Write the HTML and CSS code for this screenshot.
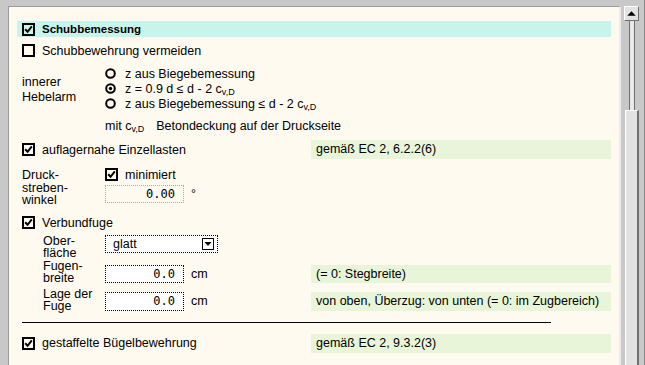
FILE: index.html
```html
<!DOCTYPE html>
<html lang="de">
<head>
    <meta charset="UTF-8">
    <title>Schubbemessung</title>
    <link rel="stylesheet" href="styles.css">
</head>
<body>
<div class="frame">
    <div class="panel">
        <div class="head">
            <svg class="cb" viewBox="0 0 13 13"><rect x="1" y="1" width="11" height="11"/><path d="M3.2 6.2 L5.6 8.8 L9.8 3.4"/></svg>
            <span>Schubbemessung</span>
        </div>
        <div class="line">
            <svg class="cb" viewBox="0 0 13 13"><rect x="1" y="1" width="11" height="11"/></svg>
            <span>Schubbewehrung vermeiden</span>
        </div>

        <div class="grid hebel">
            <div class="lbl">innerer<br>Hebelarm</div>
            <div class="opts">
                <div class="opt"><svg class="rb" viewBox="0 0 11 11"><circle cx="5.5" cy="5.5" r="4.3"/></svg><span>z aus Biegebemessung</span></div>
                <div class="opt"><svg class="rb" viewBox="0 0 11 11"><circle cx="5.5" cy="5.5" r="4.3"/><circle class="dot" cx="5.5" cy="5.5" r="1.7"/></svg><span>z = 0.9 d ≤ d - 2 c<sub>v,D</sub></span></div>
                <div class="opt"><svg class="rb" viewBox="0 0 11 11"><circle cx="5.5" cy="5.5" r="4.3"/></svg><span>z aus Biegebemessung ≤ d - 2 c<sub>v,D</sub></span></div>
            </div>
        </div>
        <div class="mit"><span class="sym">mit c<sub>v,D</sub></span>Betondeckung auf der Druckseite</div>

        <div class="grid row auflager">
            <div class="span2">
                <svg class="cb" viewBox="0 0 13 13"><rect x="1" y="1" width="11" height="11"/><path d="M3.2 6.2 L5.6 8.8 L9.8 3.4"/></svg>
                <span>auflagernahe Einzellasten</span>
            </div>
            <div class="note">gemäß EC 2, 6.2.2(6)</div>
        </div>

        <div class="grid druck">
            <div class="lbl">Druck-<br>streben-<br>winkel</div>
            <div class="ctl">
                <div class="sub">
                    <svg class="cb" viewBox="0 0 13 13"><rect x="1" y="1" width="11" height="11"/><path d="M3.2 6.2 L5.6 8.8 L9.8 3.4"/></svg>
                    <span>minimiert</span>
                </div>
                <div class="field"><div class="num off">0.00</div><span>°</span></div>
            </div>
        </div>

        <div class="line fuge">
            <svg class="cb" viewBox="0 0 13 13"><rect x="1" y="1" width="11" height="11"/><path d="M3.2 6.2 L5.6 8.8 L9.8 3.4"/></svg>
            <span>Verbundfuge</span>
        </div>

        <div class="grid row ober">
            <div class="lbl ind">Ober-<br>fläche</div>
            <div class="field">
                <div class="sel"><span>glatt</span>
                    <svg class="arr" viewBox="0 0 12 12"><rect x="0.5" y="0.5" width="11" height="11"/><path d="M2.5 4 H9.5 L6 8 Z"/></svg>
                </div>
            </div>
        </div>

        <div class="grid row fugen">
            <div class="lbl ind up3">Fugen-<br>breite</div>
            <div class="field"><div class="num">0.0</div><span>cm</span></div>
            <div class="note">(= 0: Stegbreite)</div>
        </div>

        <div class="grid row lage">
            <div class="lbl ind up2">Lage der<br>Fuge</div>
            <div class="field"><div class="num">0.0</div><span>cm</span></div>
            <div class="note">von oben, Überzug: von unten (= 0: im Zugbereich)</div>
        </div>

        <div class="rule"></div>

        <div class="grid row staffel">
            <div class="span2">
                <svg class="cb" viewBox="0 0 13 13"><rect x="1" y="1" width="11" height="11"/><path d="M3.2 6.2 L5.6 8.8 L9.8 3.4"/></svg>
                <span>gestaffelte Bügelbewehrung</span>
            </div>
            <div class="note">gemäß EC 2, 9.3.2(3)</div>
        </div>
    </div>

    <div class="sbar">
        <div class="btn"><svg viewBox="0 0 14 14"><path d="M2.5 9.5 H11.5 L7 4.5 Z"/></svg></div>
        <div class="track"></div>
        <div class="thumb"></div>
    </div>
</div>
</body>
</html>
```

FILE: styles.css
```css
body {
    margin: 0;
    background-color: #c8c8c8;
    font-family: "Liberation Sans", Arial, sans-serif;
    font-size: 12.5px;
    color: #000;
    overflow: hidden;
}
.frame {
    display: flex;
    height: 365px;
}
.panel {
    margin: 6px 0 0 8px;
    width: 589px;
    padding: 14px 8px 0 13px;
    background-color: #fffaf0;
    border-top: 1px solid #9c9c9c;
    border-left: 1px solid #9c9c9c;
    border-right: 2px solid #ececec;
}
sub {
    font-size: 9px;
    vertical-align: -2px;
    line-height: 0;
}
.cb {
    width: 13px;
    height: 13px;
    flex: none;
}
.cb rect {
    fill: none;
    stroke: #000;
    stroke-width: 2;
}
.cb path {
    fill: none;
    stroke: #000;
    stroke-width: 2;
}
.rb {
    width: 11px;
    height: 11px;
    flex: none;
}
.rb circle {
    fill: none;
    stroke: #000;
    stroke-width: 2;
}
.rb .dot {
    fill: #000;
    stroke: none;
}
.head {
    display: flex;
    align-items: center;
    gap: 7px;
    height: 16px;
    margin-left: -5px;
    padding-left: 5px;
    background-color: #c8f5eb;
    font-weight: bold;
    font-size: 11.5px;
}
.line {
    display: flex;
    align-items: center;
    gap: 7px;
    height: 15px;
    margin-top: 6px;
}
.grid {
    display: grid;
    grid-template-columns: 83px 206px 300px;
}
.lbl {
    line-height: 12.5px;
}
.lbl.ind {
    padding-left: 21px;
}
.lbl.up3 {
    margin-top: -3px;
}
.lbl.up2 {
    margin-top: -2px;
}
.hebel {
    margin-top: 8px;
}
.hebel .lbl {
    padding-top: 9px;
    line-height: 15px;
}
.opts {
    grid-column: 2 / 4;
}
.opt {
    display: flex;
    align-items: center;
    gap: 9px;
    height: 15px;
    white-space: nowrap;
}
.mit {
    margin-top: 8px;
    height: 14px;
    line-height: 14px;
    padding-left: 83px;
}
.mit .sym {
    margin-right: 12px;
}
.row {
    height: 19px;
    align-items: center;
}
.span2 {
    grid-column: 1 / 3;
    display: flex;
    align-items: center;
    gap: 7px;
}
.note {
    height: 19px;
    line-height: 19px;
    padding-left: 5px;
    background-color: #e8f5d8;
}
.auflager {
    margin-top: 7px;
}
.druck {
    margin-top: 9px;
}
.druck .lbl {
    margin-top: 1px;
}
.sub {
    display: flex;
    align-items: center;
    gap: 7px;
    height: 13px;
}
.field {
    display: flex;
    align-items: center;
    gap: 7px;
}
.druck .field {
    margin-top: 4px;
}
.num {
    box-sizing: border-box;
    width: 79px;
    height: 18px;
    line-height: 16px;
    padding-right: 8px;
    text-align: right;
    border: 1px dotted #000;
    background-color: #fff;
    font-family: "DejaVu Sans Mono", "Liberation Mono", monospace;
    font-size: 12px;
}
.num.off {
    border-color: #a8a8a8;
    background-color: transparent;
}
.fuge {
    margin-top: 9px;
    height: 14px;
}
.ober {
    margin-top: 5px;
    align-items: start;
}
.sel {
    box-sizing: border-box;
    width: 113px;
    height: 18px;
    padding: 0 3px 0 7px;
    display: flex;
    align-items: center;
    justify-content: space-between;
    border: 1px dotted #000;
    background-color: #fff;
}
.arr {
    width: 12px;
    height: 12px;
}
.arr rect {
    fill: #fff;
    stroke: #000;
}
.arr path {
    fill: #000;
}
.fugen {
    margin-top: 9px;
    height: 18px;
}
.fugen .note {
    height: 18px;
    line-height: 18px;
}
.lage {
    margin-top: 9px;
}
.lage .num {
    height: 19px;
    line-height: 17px;
}
.rule {
    margin-top: 13px;
    width: 529px;
    border-top: 1px solid #000;
}
.staffel {
    margin-top: 11px;
}
.sbar {
    position: relative;
    width: 21px;
    margin-left: 2px;
    border-right: 1px solid #8a8a8a;
}
.btn {
    box-sizing: border-box;
    width: 15px;
    height: 15px;
    margin: 6px 0 0 1px;
    background-color: #e2e2e2;
    border-top: 1px solid #fff;
    border-left: 1px solid #fff;
    border-right: 1px solid #707070;
    border-bottom: 1px solid #707070;
}
.btn svg {
    display: block;
    width: 13px;
    height: 13px;
}
.btn path {
    fill: #000;
}
.track {
    margin-left: 6px;
    width: 4px;
    height: 89px;
    background-color: #e8e8e8;
    border-left: 1px solid #707070;
    border-right: 1px solid #707070;
}
.thumb {
    box-sizing: border-box;
    width: 14px;
    height: 260px;
    margin-left: 2px;
    background-color: #e2e2e2;
    border-left: 1px solid #fff;
    border-top: 1px solid #fff;
    border-right: 2px solid #707070;
}
```
